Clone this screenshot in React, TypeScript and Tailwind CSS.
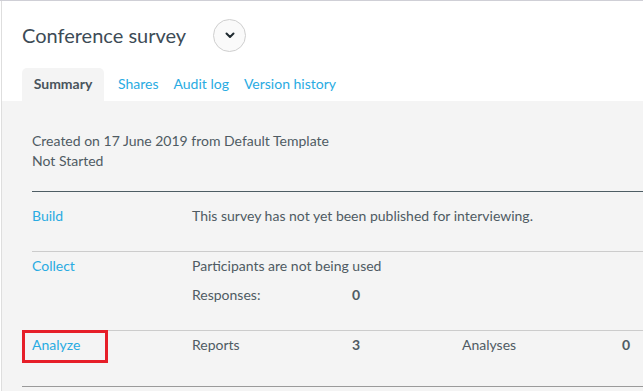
import React from "react";

const link = "text-[#29abe2]";

const App: React.FC = () => {
    return (
        <div
            className="w-[643px] h-[391px] overflow-hidden bg-white border-t border-[#cfcfd6] text-[#4f5b63]"
            style={{ fontFamily: "Lato, 'Noto Sans', sans-serif" }}>
            <div className="ml-[1px] h-full border-l border-[#dedede] flex flex-col">
                {/* header */}
                <div className="flex items-center h-[66px] pl-[20px] pt-[2px]">
                    <h1 className="text-[20px] text-[#3d4b56] leading-none">Conference survey</h1>
                    <button className="ml-[27px] w-[33px] h-[33px] rounded-full border border-[#cfcfcf] bg-[#fafafa] flex items-center justify-center">
                        <svg width="10" height="7" viewBox="0 0 10 7">
                            <path d="M1.5 1.5 L5 5 L8.5 1.5" fill="none" stroke="#1f2a30" strokeWidth="2" strokeLinecap="round" strokeLinejoin="round" />
                        </svg>
                    </button>
                </div>

                {/* tabs */}
                <div className="flex items-end h-[34px] pl-[20px] text-[14px]">
                    <div className="h-[33px] w-[82px] pb-[2px] rounded-t-[5px] bg-[#f4f4f4] flex items-center justify-center font-bold text-[#4a555c]">
                        Summary
                    </div>
                    <div className={`h-[33px] pb-[2px] flex items-center gap-[15px] ml-[14px] ${link}`}>
                        <span>Shares</span>
                        <span>Audit log</span>
                        <span>Version history</span>
                    </div>
                </div>

                {/* panel */}
                <div className="flex-1 bg-[#f4f4f4] text-[14px] leading-[20px]">
                    <div className="pl-[30px] pt-[30px] pb-[20px]">
                        <div>Created on 17 June 2019 from Default Template</div>
                        <div>Not Started</div>
                    </div>

                    <div className="ml-[30px] border-t border-[#4e5d64]">
                        <div className="h-[59px] flex pt-[14px]">
                            <div className={`w-[160px] ${link}`}>Build</div>
                            <div>This survey has not yet been published for interviewing.</div>
                        </div>

                        <div className="h-[79px] border-t border-[#cccccc] pt-[4px]">
                            <div className="flex">
                                <div className={`w-[160px] ${link}`}>Collect</div>
                                <div>Participants are not being used</div>
                            </div>
                            <div className="flex mt-[9px]">
                                <div className="w-[160px]" />
                                <div className="w-[160px]">Responses:</div>
                                <div className="font-bold">0</div>
                            </div>
                        </div>

                        <div className="relative h-[56px] border-t border-[#cccccc] pt-[4px] flex">
                            <div className={`w-[160px] ${link}`}>Analyze</div>
                            <div className="w-[160px]">Reports</div>
                            <div className="w-[110px] font-bold">3</div>
                            <div className="w-[160px]">Analyses</div>
                            <div className="font-bold">0</div>
                            <div className="absolute left-[-10px] top-[-1px] w-[86px] h-[33px] border-[3px] border-[#e61e28]" />
                        </div>
                    </div>
                    <div className="ml-[20px] border-t border-[#9a9a9a]" />
                </div>
            </div>
        </div>
    );
};

export default App;
